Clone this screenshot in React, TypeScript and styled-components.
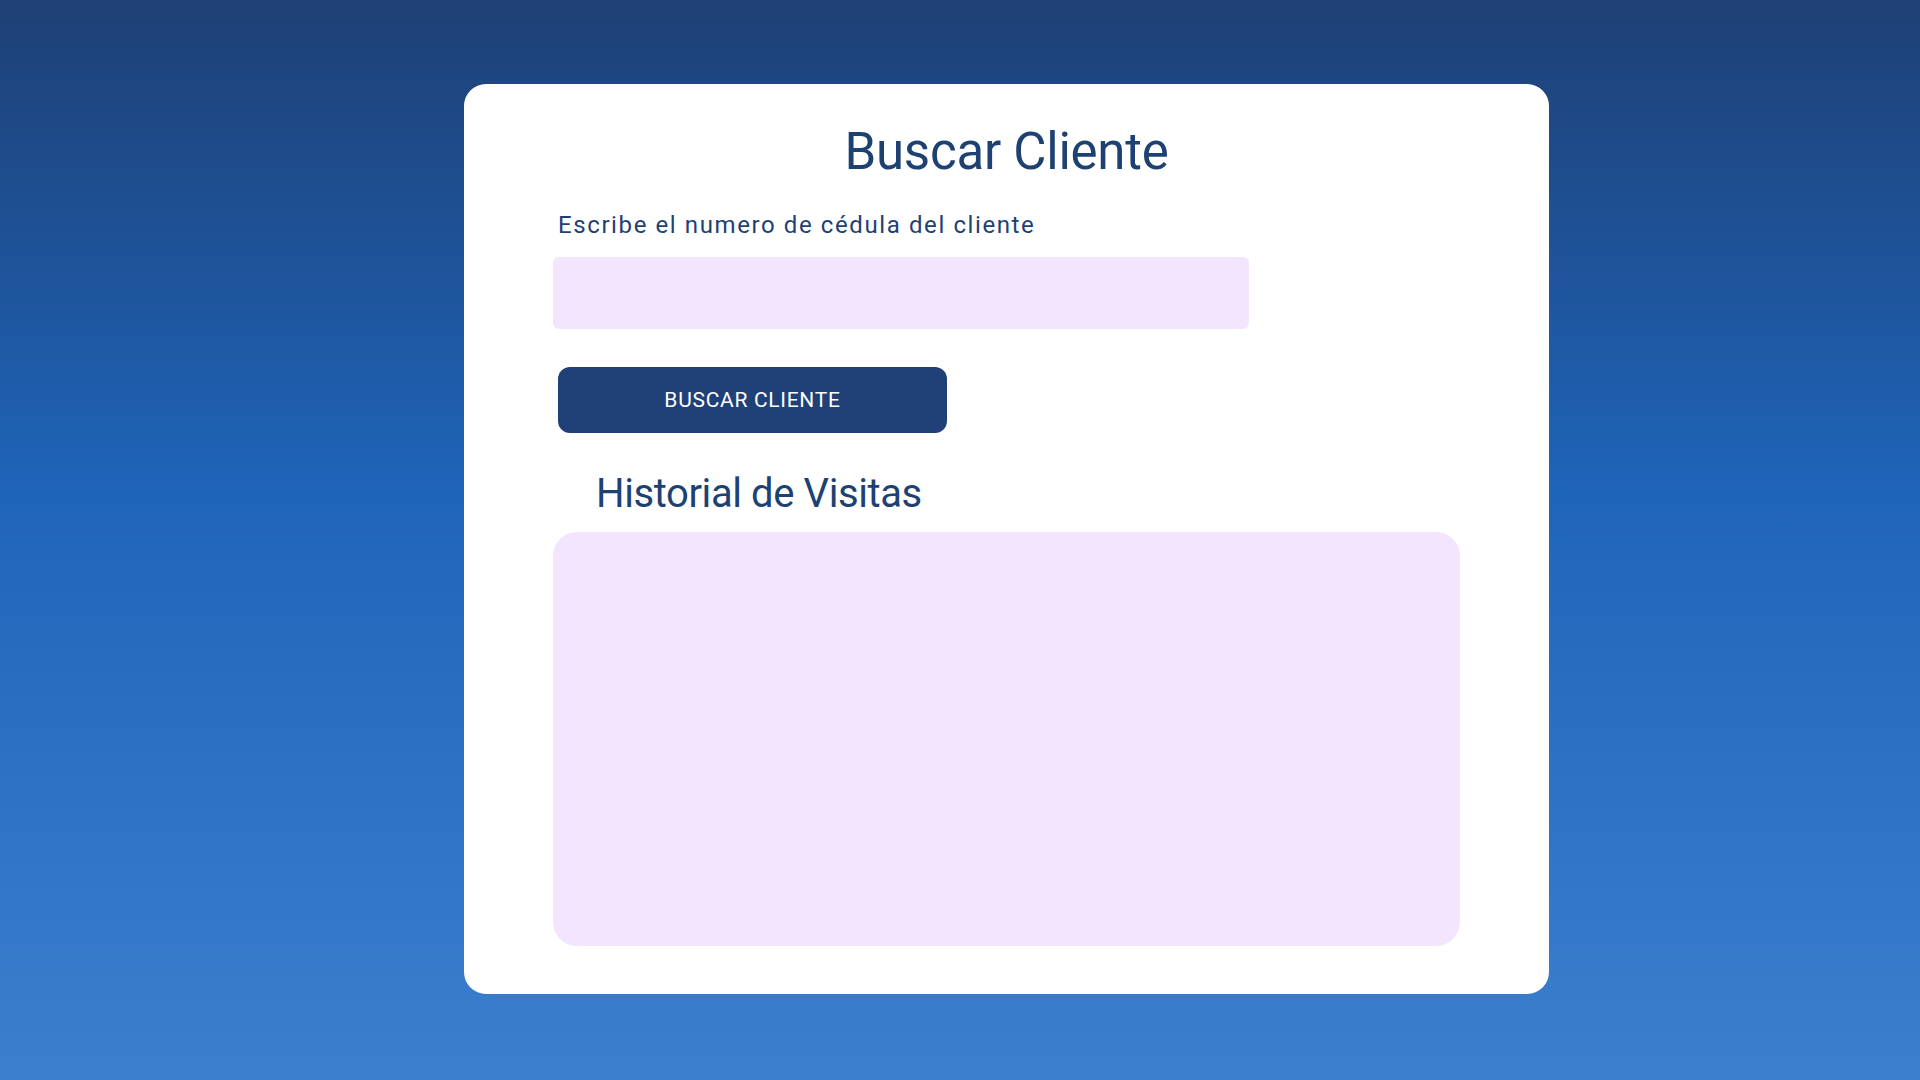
import React, { useState } from "react";
import styled, { createGlobalStyle } from "styled-components";

const GlobalStyle = createGlobalStyle`
  html, body {
    margin: 0;
    padding: 0;
  }
  body {
    font-family: Roboto, "Noto Sans", sans-serif;
  }
  * {
    box-sizing: border-box;
  }
`;

const Page = styled.div`
  min-height: 100vh;
  display: flex;
  justify-content: center;
  align-items: flex-start;
  padding: 84px 0 0 93px;
  background: linear-gradient(to bottom, #1e4075 0%, #1e64b8 45%, #3c7fcf 100%);
`;

const Card = styled.div`
  width: 1085px;
  height: 910px;
  display: flex;
  flex-direction: column;
  padding: 37px 89px 48px;
  background: #ffffff;
  border-radius: 22px;
`;

const Title = styled.h1`
  margin: 0 0 28px;
  font-family: Roboto, sans-serif;
  font-size: 51px;
  font-weight: 400;
  line-height: 62px;
  letter-spacing: -0.25px;
  color: #1e4174;
  text-align: center;
`;

const Label = styled.label`
  margin: 0 0 18px 5px;
  font-family: Roboto, sans-serif;
  font-size: 24px;
  line-height: 28px;
  letter-spacing: 1.6px;
  color: #1e4174;
`;

const Input = styled.input`
  width: 696px;
  height: 72px;
  margin-bottom: 38px;
  padding: 0 16px;
  border: none;
  border-radius: 6px;
  background: #f3e5fd;
  font-family: Roboto, sans-serif;
  font-size: 20px;
  color: #1e4174;
  outline: none;
`;

const Button = styled.button`
  width: 389px;
  height: 66px;
  margin: 0 0 37px 5px;
  border: none;
  border-radius: 12px;
  background: #1f4177;
  color: #ffffff;
  font-family: Roboto, sans-serif;
  font-size: 21px;
  font-weight: 400;
  letter-spacing: 0.7px;
  text-transform: uppercase;
  cursor: pointer;
`;

const Subtitle = styled.h2`
  margin: 0 0 14px 43px;
  font-family: Roboto, sans-serif;
  font-size: 40px;
  font-weight: 400;
  line-height: 48px;
  letter-spacing: -0.4px;
  color: #1e4174;
`;

const History = styled.div`
  height: 414px;
  border-radius: 24px;
  background: #f3e5fd;
`;

const App = () => {
  const [cedula, setCedula] = useState("");

  return (
    <>
      <GlobalStyle />
      <Page>
        <Card>
          <Title>Buscar Cliente</Title>
          <Label htmlFor="cedula">Escribe el numero de cédula del cliente</Label>
          <Input id="cedula" value={cedula} onChange={e => setCedula(e.target.value)} />
          <Button>Buscar Cliente</Button>
          <Subtitle>Historial de Visitas</Subtitle>
          <History />
        </Card>
      </Page>
    </>
  );
};

export default App;
